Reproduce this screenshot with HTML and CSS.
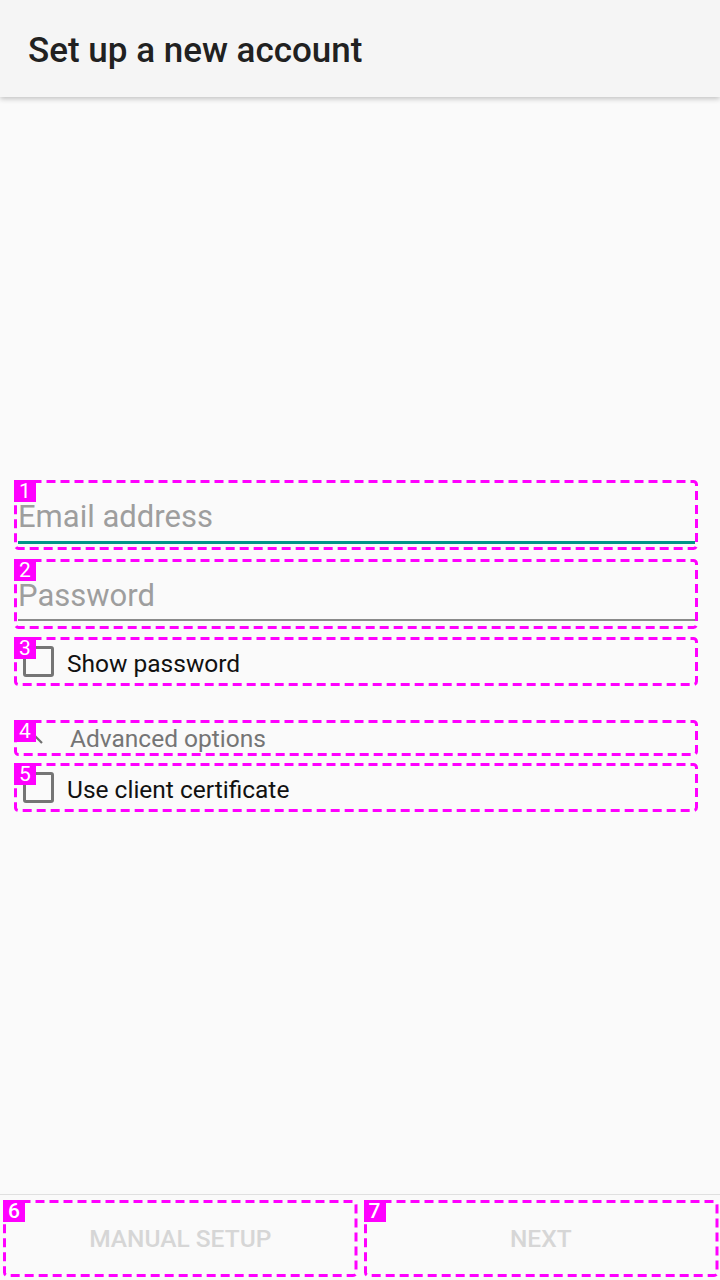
FILE: index.html
```html
<!DOCTYPE html>
<html>
<head>
<meta charset="utf-8">
<link rel="stylesheet" href="styles.css">
</head>
<body>
<header class="toolbar">
  <h1 class="title">Set up a new account</h1>
</header>
<main class="form">
  <div class="field field-email">
    <div class="field-text">Email address</div>
    <div class="underline underline-active"></div>
    <span class="anno"><svg class="anno-svg"><rect class="anno-rect"/></svg><span class="tag">1</span></span>
  </div>
  <div class="field field-password">
    <div class="field-text">Password</div>
    <div class="underline"></div>
    <span class="anno"><svg class="anno-svg"><rect class="anno-rect"/></svg><span class="tag">2</span></span>
  </div>
  <div class="check-row">
    <span class="checkbox"></span>
    <span class="check-label">Show password</span>
    <span class="anno"><svg class="anno-svg"><rect class="anno-rect"/></svg><span class="tag">3</span></span>
  </div>
  <div class="advanced">
    <svg class="adv-icon" width="16" height="16" viewBox="0 0 16 16"><path d="M1 1 L14 14" fill="none" stroke="#6f6f6f" stroke-width="2.2"/></svg>
    <span class="adv-label">Advanced options</span>
    <span class="anno"><svg class="anno-svg"><rect class="anno-rect"/></svg><span class="tag">4</span></span>
  </div>
  <div class="check-row check-cert">
    <span class="checkbox"></span>
    <span class="check-label">Use client certificate</span>
    <span class="anno"><svg class="anno-svg"><rect class="anno-rect"/></svg><span class="tag">5</span></span>
  </div>
</main>
<footer class="bottombar">
  <div class="btn">MANUAL SETUP<span class="anno"><svg class="anno-svg"><rect class="anno-rect"/></svg><span class="tag">6</span></span></div>
  <div class="btn">NEXT<span class="anno"><svg class="anno-svg"><rect class="anno-rect"/></svg><span class="tag">7</span></span></div>
</footer>
</body>
</html>
```
FILE: styles.css
```css
* { box-sizing: border-box; }
html, body { margin: 0; padding: 0; }
body {
  width: 720px;
  height: 1280px;
  background: #fafafa;
  font-family: Roboto, "Noto Sans", sans-serif;
  display: flex;
  flex-direction: column;
  overflow: hidden;
}
.toolbar {
  height: 97px;
  flex: none;
  background: #f5f5f5;
  box-shadow: 0 2px 5px rgba(0,0,0,0.22);
  display: flex;
  align-items: center;
  padding: 5px 0 0 28px;
  position: relative;
  z-index: 1;
}
.title {
  margin: 0;
  font-size: 35px;
  font-weight: 500;
  color: #212121;
  line-height: 40px;
}
.form {
  margin-top: 383px;
  padding: 0 22px 0 14px;
  display: flex;
  flex-direction: column;
}
.field {
  position: relative;
  height: 70px;
  padding-top: 19px;
  display: flex;
  flex-direction: column;
}
.field-password { margin-top: 9px; padding-top: 19px; }
.field-text {
  padding-left: 4px;
  font-size: 31px;
  line-height: 36px;
  color: #9e9e9e;
}
.underline {
  margin: 5px 3px 0 4px;
  height: 2px;
  background: #8a8a8a;
}
.underline-active {
  margin-top: 6px;
  height: 3px;
  background: #009688;
}
.check-row {
  position: relative;
  height: 49px;
  margin-top: 8px;
  display: flex;
  align-items: center;
  padding-left: 9px;
  gap: 13px;
}
.check-cert { margin-top: 7px; }
.checkbox {
  width: 31px;
  height: 31px;
  border: 3px solid #757575;
  border-radius: 3px;
  flex: none;
}
.check-label {
  font-size: 24.5px;
  line-height: 29px;
  color: #111;
  padding-top: 3px;
}
.advanced {
  position: relative;
  height: 36px;
  margin-top: 34px;
  display: flex;
  align-items: center;
  padding-left: 14px;
}
.adv-icon { flex: none; margin-top: -3px; }
.adv-label {
  margin-left: 26px;
  font-size: 24.5px;
  line-height: 29px;
  color: #757575;
}
.bottombar {
  margin-top: auto;
  flex: none;
  border-top: 1px solid #e0e0e0;
  padding: 5px 2px 3px 3px;
  display: grid;
  grid-template-columns: 1fr 1fr;
  gap: 6px;
}
.btn {
  position: relative;
  height: 77px;
  display: flex;
  align-items: center;
  justify-content: center;
  font-size: 24.5px;
  font-weight: 500;
  color: #d6d6d6;
}
.anno {
  position: absolute;
  inset: 0;
  pointer-events: none;
}
.anno-svg {
  position: absolute;
  inset: 0;
  width: 100%;
  height: 100%;
  overflow: visible;
}
.anno-rect {
  x: 1.5px;
  y: 1.5px;
  width: calc(100% - 3px);
  height: calc(100% - 3px);
  rx: 3px;
  fill: none;
  stroke: #ff00ff;
  stroke-width: 3px;
  stroke-dasharray: 9 5;
}
.tag {
  position: absolute;
  top: 0;
  left: 0;
  width: 22px;
  height: 22px;
  background: #ff00ff;
  color: #fff;
  font-size: 21px;
  line-height: 22px;
  text-align: center;
  font-family: Roboto, sans-serif;
}
```
